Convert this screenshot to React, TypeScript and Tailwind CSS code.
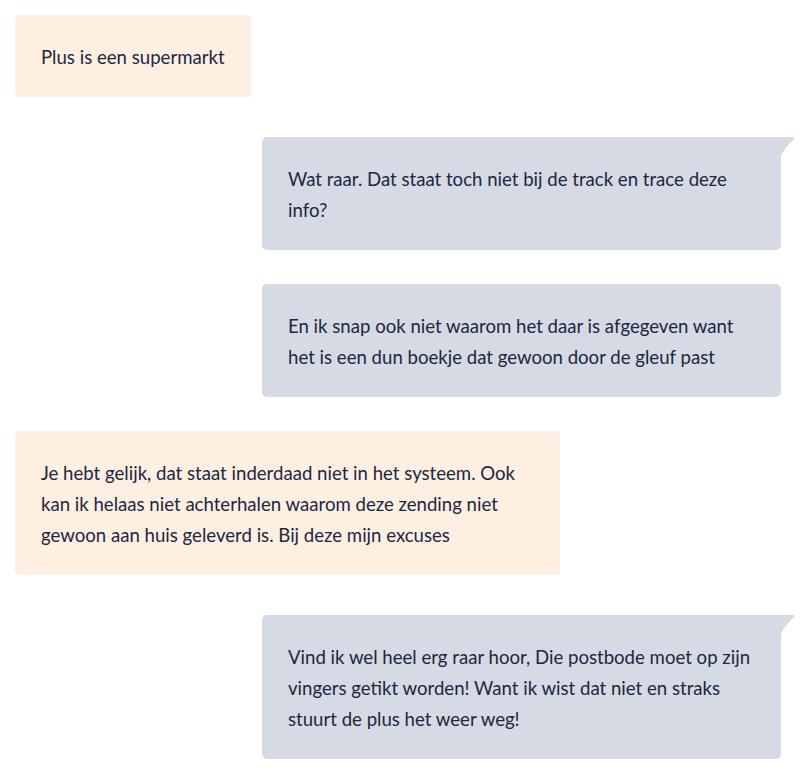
import React from 'react'

type Msg = { from: 'agent' | 'user'; text: string; tail?: boolean; mt: string }

const messages: Msg[] = [
  { from: 'agent', text: 'Plus is een supermarkt', mt: 'mt-[15px]' },
  { from: 'user', text: 'Wat raar. Dat staat toch niet bij de track en trace deze info?', tail: true, mt: 'mt-[40px]' },
  { from: 'user', text: 'En ik snap ook niet waarom het daar is afgegeven want het is een dun boekje dat gewoon door de gleuf past', mt: 'mt-[34px]' },
  { from: 'agent', text: 'Je hebt gelijk, dat staat inderdaad niet in het systeem. Ook kan ik helaas niet achterhalen waarom deze zending niet gewoon aan huis geleverd is. Bij deze mijn excuses', mt: 'mt-[34px]' },
  { from: 'user', text: 'Vind ik wel heel erg raar hoor, Die postbode moet op zijn vingers getikt worden! Want ik wist dat niet en straks stuurt de plus het weer weg!', tail: true, mt: 'mt-[40px]' },
]

function Tail() {
  return (
    <svg className="absolute top-0 right-[-14px]" width="14" height="19" viewBox="0 0 14 19">
      <path d="M0 0 H12 Q14.5 0 13 2.2 Q4 10 0 19 Z" fill="#d5dae4" />
    </svg>
  )
}

function Bubble({ m }: { m: Msg }) {
  if (m.from === 'agent') {
    return (
      <div className={`${m.mt} flex justify-start`}>
        <div className="max-w-[545px] rounded-[5px] rounded-br-none bg-[#fdefe1] px-[26px] pt-[27px] pb-[24px] text-[18.6px] leading-[31px] text-[#1c2741]">
          {m.text}
        </div>
      </div>
    )
  }
  return (
    <div className={`${m.mt} flex justify-end`}>
      <div
        className={`relative w-[519px] rounded-[5px] bg-[#d5dae4] px-[26px] pt-[27px] pb-[24px] text-[18.6px] leading-[31px] text-[#1c2741] ${
          m.tail ? 'rounded-tr-none' : ''
        }`}
      >
        {m.tail && <Tail />}
        {m.text}
      </div>
    </div>
  )
}

export default function App() {
  return (
    <div className="min-h-screen w-[800px] bg-white pl-[15px] pr-[19px] pb-[12px] font-['Lato',sans-serif]">
      {messages.map((m, i) => (
        <Bubble key={i} m={m} />
      ))}
    </div>
  )
}
